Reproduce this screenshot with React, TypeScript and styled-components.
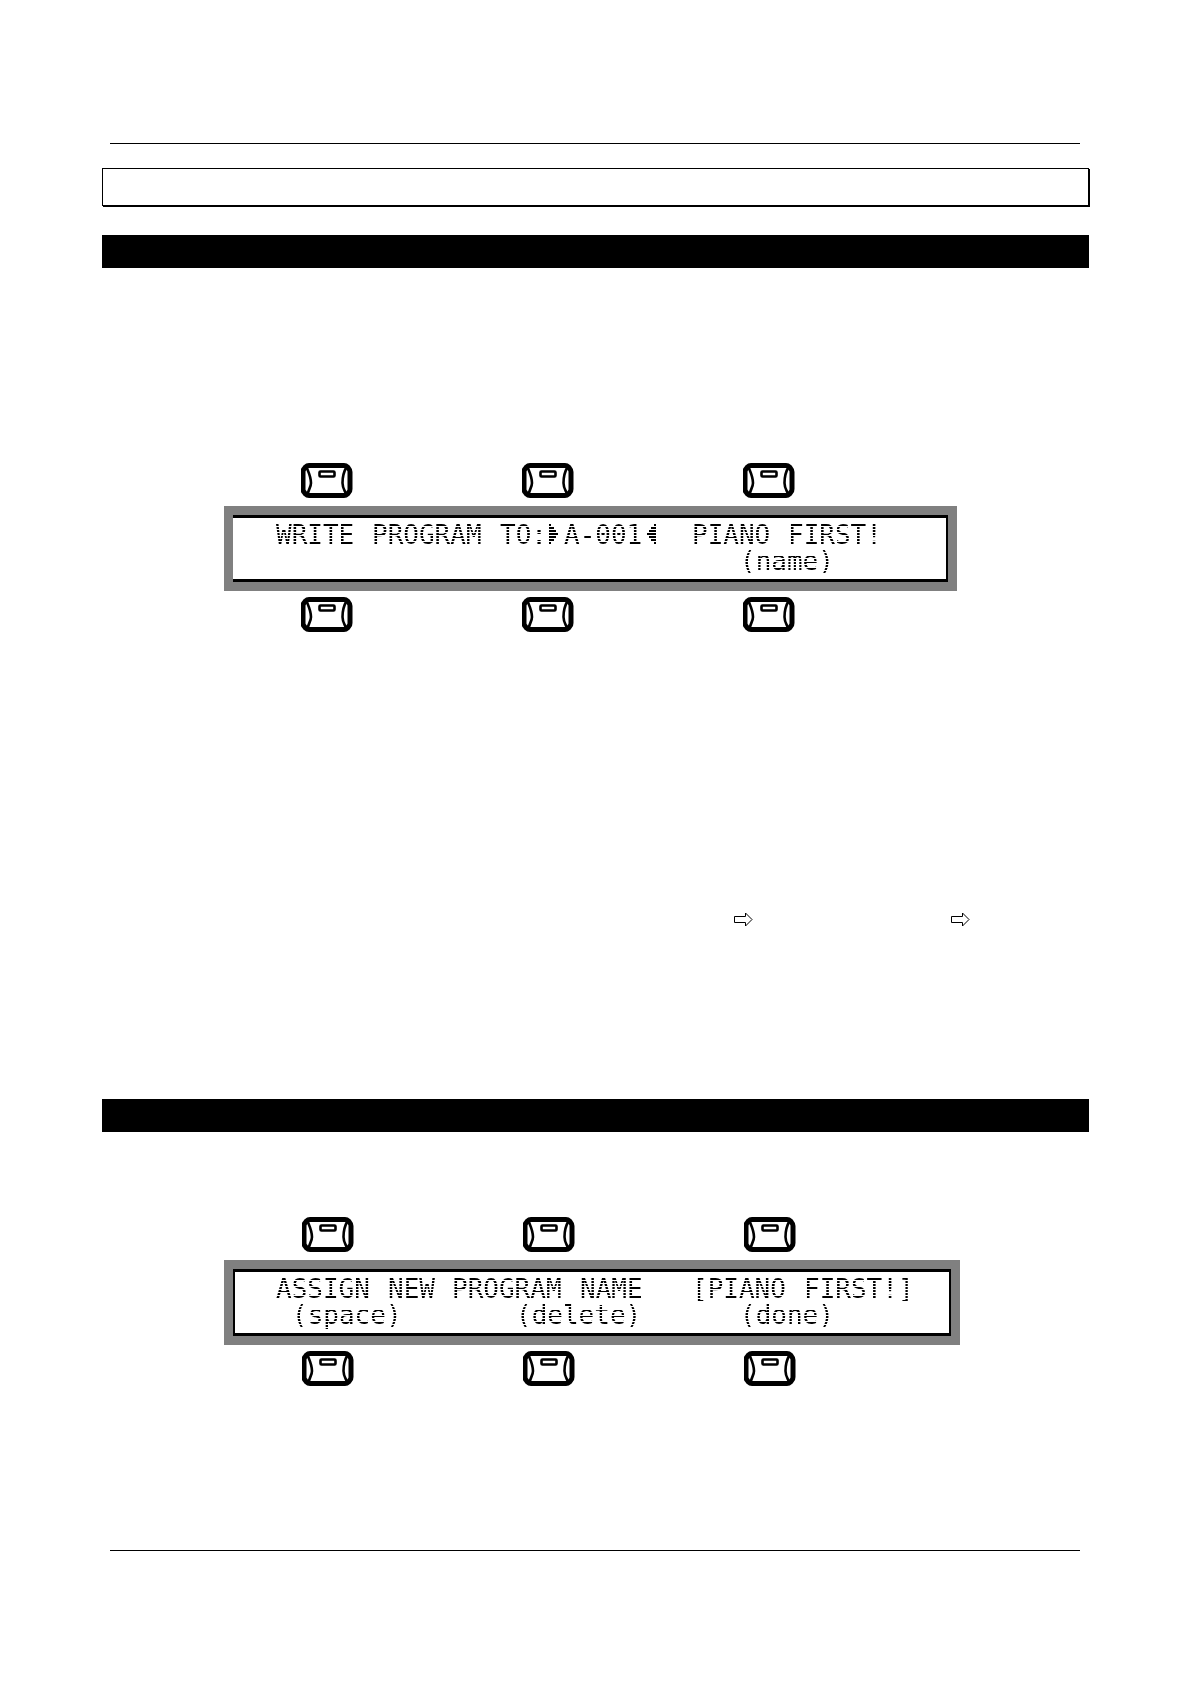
import React from "react";
import styled, { createGlobalStyle } from "styled-components";

const GlobalStyle = createGlobalStyle`
  *, *::before, *::after { box-sizing: border-box; }
  body { margin: 0; background: #fff; color: #000; font-family: "Liberation Sans", Arial, sans-serif; }
`;

const Page = styled.main`
  display: flex;
  flex-direction: column;
  padding: 143px 101px 133px 102px;
`;

const Rule = styled.hr<{ $before?: number }>`
  width: auto;
  height: 1px;
  margin: ${(p) => p.$before ?? 0}px 9px 0 8px;
  border: 0;
  background: #000;
`;

const TitleBox = styled.header`
  height: 38px;
  margin-top: 24px;
  border: 1px solid #000;
  box-shadow: 1px 1px 0 #000;
`;

const SectionBar = styled.div`
  height: 33px;
  background: #000;
`;

const Section = styled.section<{ $before: number; $lead: number }>`
  display: flex;
  flex-direction: column;
  gap: ${(p) => p.$lead}px;
  margin-top: ${(p) => p.$before}px;
`;

const Panel = styled.div`
  display: flex;
  flex-direction: column;
  align-items: flex-start;
  margin-left: 122px;
`;

const KeyRow = styled.div<{ $inset: number }>`
  display: flex;
  gap: 169px;
  padding-left: ${(p) => p.$inset}px;
`;

const KeyButton = styled.button`
  display: block;
  width: 52px;
  height: 35px;
  padding: 0;
  border: 0;
  background: none;
  cursor: pointer;

  svg { display: block; }
`;

const Bezel = styled.div<{ $width: number }>`
  width: ${(p) => p.$width}px;
  margin: 8px 0 6px;
  padding: 9px;
  background: #808080;
`;

const Screen = styled.div<{ $leftEdge: number }>`
  display: grid;
  grid-template-columns: repeat(40, 16px);
  grid-template-rows: repeat(2, 25px);
  row-gap: 1px;
  height: 67px;
  padding: 3px 0 0 ${(p) => 43 - p.$leftEdge}px;
  border: solid #000;
  border-width: 3px 2px 3px ${(p) => p.$leftEdge}px;
  background: #fff;
  overflow: hidden;
`;

const Cells = styled.span<{ $row: number; $col: number; $span: number }>`
  grid-row: ${(p) => p.$row};
  grid-column: ${(p) => p.$col + 1} / span ${(p) => p.$span};
  height: 28px;
  font: 26px/28px "DejaVu Sans Mono", monospace;
  white-space: pre;
  mask-image: repeating-linear-gradient(to bottom, #000 0 2px, transparent 2px 3px);

  svg { display: block; }
`;

const References = styled.div`
  display: flex;
  gap: 198px;
  margin-top: 280px;
  padding-left: 632px;
`;

function Key({ label }: { label: string }) {
  return (
    <KeyButton type="button" aria-label={label}>
      <svg width="52" height="35" viewBox="0 0 52 35" fill="none" stroke="#000">
        <path d="M8 2.500h35q2 0 3.500 1.500l1.500 2q1 1 1 3v17q0 2-1 3l-1.500 2q-1.500 1.500-3.500 1.500h-35q-2 0-3.500-1.500l-1.500-2q-1-1-1-3v-17q0-2 1-3l1.500-2q1.500-1.500 3.500-1.500z" strokeWidth="5" />
        <path d="M5.500 4c2.500 6 4.500 10 4.500 16 0 4-2.500 6-3.500 12" strokeWidth="2.600" />
        <path d="M45.500 4c-3.500 6-4 10-4 16 0 5 2 7 4 12" strokeWidth="2.600" />
        <rect x="18.500" y="8.500" width="15" height="5" rx="1" strokeWidth="2.600" />
      </svg>
    </KeyButton>
  );
}

function Cursor({ flip }: { flip?: boolean }) {
  const widths = [2, 5, 7, 9, 7, 5, 2];
  return (
    <svg width="16" height="25" viewBox="0 0 16 25" role="img" aria-label={flip ? "cursor end" : "cursor start"}>
      {widths.map((w, row) => (
        <rect key={row} x={flip ? 12 - w : 1} y={3 + row * 3} width={w} height="2" />
      ))}
    </svg>
  );
}

function ReferenceArrow() {
  return (
    <svg width="19" height="15" viewBox="0 0 19 15" fill="none" stroke="#000" role="img" aria-label="see">
      <path d="M.5 4.500h11v-3.500l6.500 6.500-6.500 6.500v-3.500H.5z" strokeWidth="1" />
    </svg>
  );
}

type Word = { text: string; row: number; col: number };

const writeWords: Word[] = [
  { text: "WRITE", row: 1, col: 0 },
  { text: "PROGRAM", row: 1, col: 6 },
  { text: "TO:", row: 1, col: 14 },
  { text: ">", row: 1, col: 17 },
  { text: "A-001", row: 1, col: 18 },
  { text: "<", row: 1, col: 23 },
  { text: "PIANO", row: 1, col: 26 },
  { text: "FIRST!", row: 1, col: 32 },
  { text: "(name)", row: 2, col: 29 },
];

const nameWords: Word[] = [
  { text: "ASSIGN", row: 1, col: 0 },
  { text: "NEW", row: 1, col: 7 },
  { text: "PROGRAM", row: 1, col: 11 },
  { text: "NAME", row: 1, col: 19 },
  { text: "[PIANO", row: 1, col: 26 },
  { text: "FIRST!]", row: 1, col: 33 },
  { text: "(space)", row: 2, col: 1 },
  { text: "(delete)", row: 2, col: 15 },
  { text: "(done)", row: 2, col: 29 },
];

type DisplayProps = { words: Word[]; width: number; leftEdge: number; inset: number };

function Display({ words, width, leftEdge, inset }: DisplayProps) {
  return (
    <Panel>
      <KeyRow $inset={inset}>
        {[1, 2, 3].map((n) => <Key key={n} label={`Upper key ${n}`} />)}
      </KeyRow>
      <Bezel $width={width}>
        <Screen $leftEdge={leftEdge}>
          {words.map((w) => (
            <Cells key={`${w.row}-${w.col}`} $row={w.row} $col={w.col} $span={w.text.length}>
              {w.text === ">" || w.text === "<" ? <Cursor flip={w.text === "<"} /> : w.text}
            </Cells>
          ))}
        </Screen>
      </Bezel>
      <KeyRow $inset={inset}>
        {[1, 2, 3].map((n) => <Key key={n} label={`Lower key ${n}`} />)}
      </KeyRow>
    </Panel>
  );
}

export default function App() {
  return (
    <>
      <GlobalStyle />
      <Page>
        <Rule />
        <TitleBox />
        <Section $before={29} $lead={195}>
          <SectionBar />
          <Display words={writeWords} width={733} leftEdge={0} inset={77} />
        </Section>
        <References>
          <ReferenceArrow />
          <ReferenceArrow />
        </References>
        <Section $before={172} $lead={85}>
          <SectionBar />
          <Display words={nameWords} width={736} leftEdge={2} inset={78} />
        </Section>
        <Rule $before={164} />
      </Page>
    </>
  );
}
